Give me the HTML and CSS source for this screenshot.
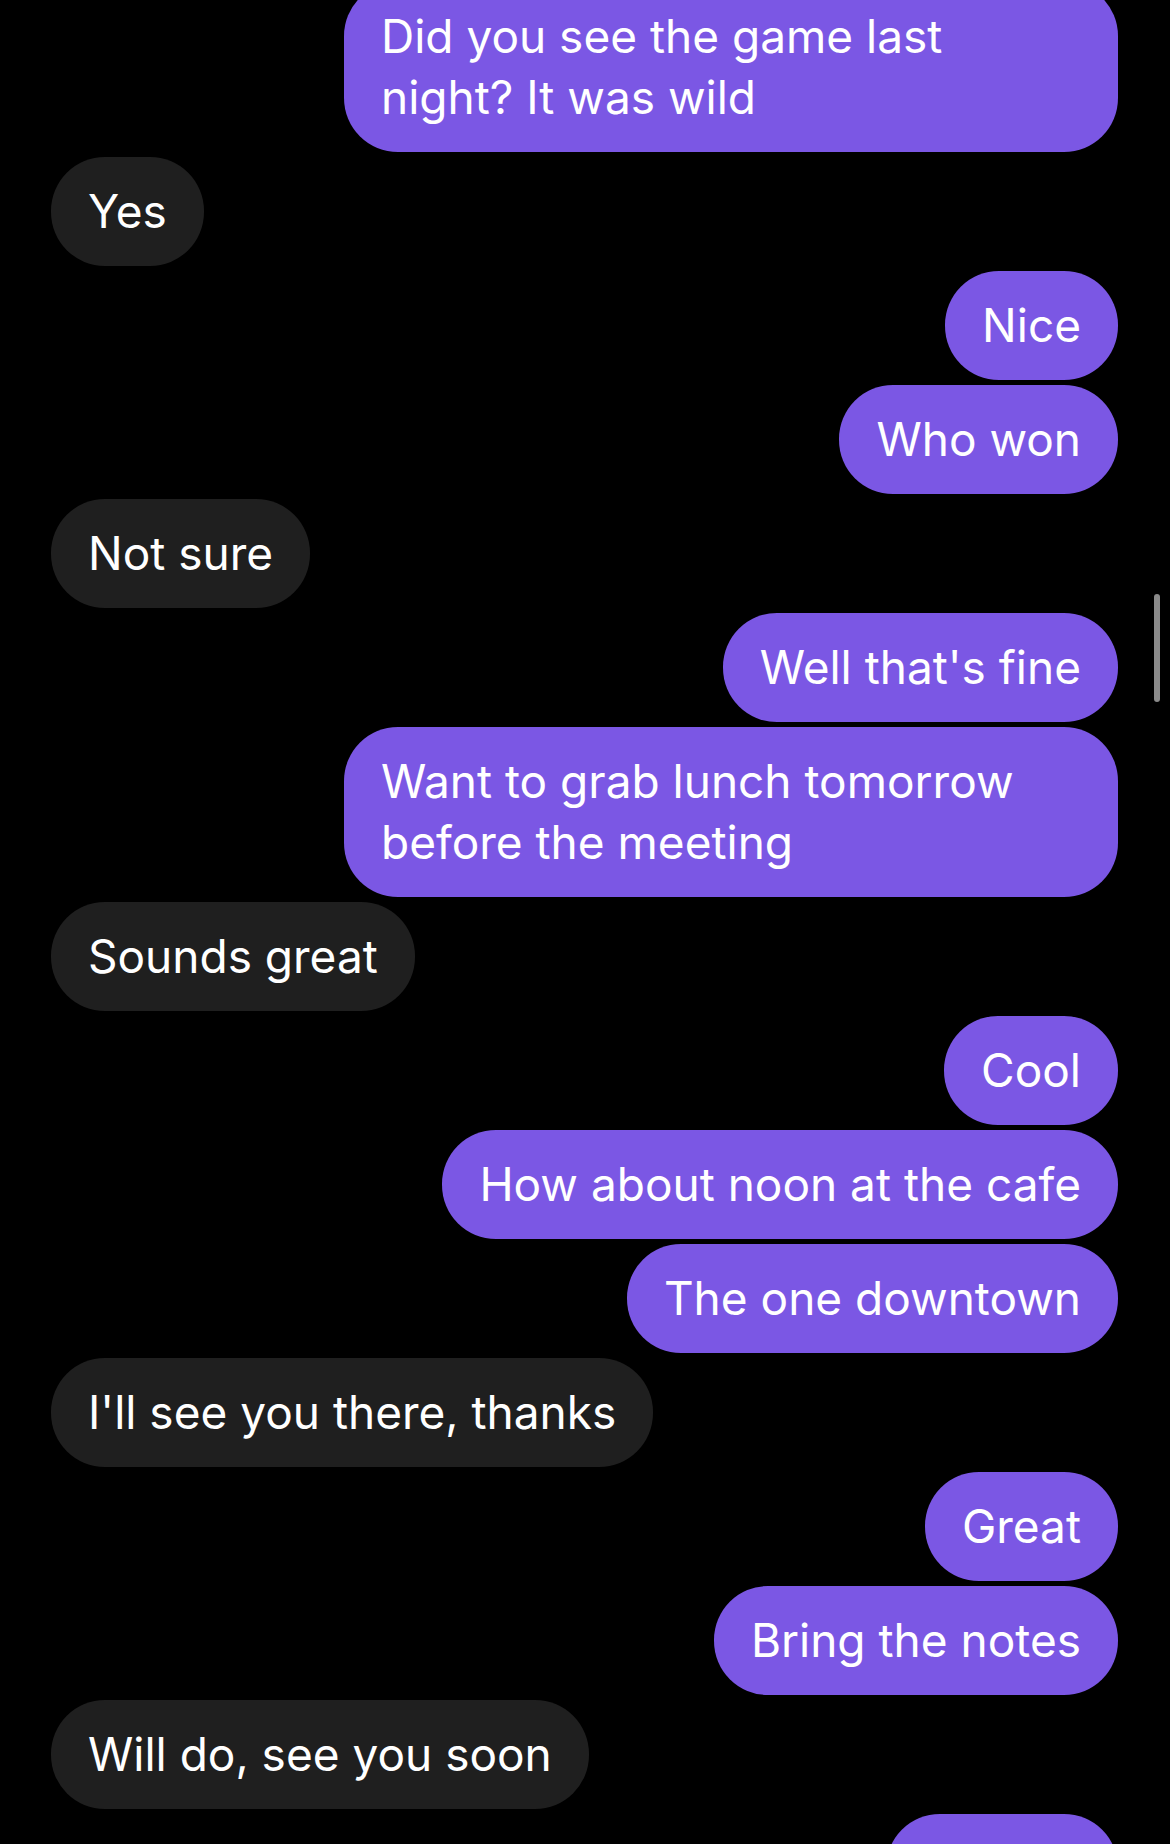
FILE: index.html
```html
<!DOCTYPE html>
<html lang="en">
<head>
  <meta charset="UTF-8" />
  <meta name="viewport" content="width=device-width, initial-scale=1.0" />
  <title>Chat</title>
  <link rel="stylesheet" href="styles.css">
</head>
<body>
  <div class="thread">
    <div class="msg sent">Did you see the game last night? It was wild</div>
    <div class="msg recv">Yes</div>
    <div class="msg sent">Nice</div>
    <div class="msg sent">Who won</div>
    <div class="msg recv">Not sure</div>
    <div class="msg sent">Well that's fine</div>
    <div class="msg sent">Want to grab lunch tomorrow before the meeting</div>
    <div class="msg recv">Sounds great</div>
    <div class="msg sent">Cool</div>
    <div class="msg sent">How about noon at the cafe</div>
    <div class="msg sent">The one downtown</div>
    <div class="msg recv">I'll see you there, thanks</div>
    <div class="msg sent">Great</div>
    <div class="msg sent">Bring the notes</div>
    <div class="msg recv">Will do, see you soon</div>
    <div class="msg sent">Perfect</div>
  </div>
  <div class="scrollbar"></div>
</body>
</html>
```

FILE: styles.css
```css
body {
  margin: 0;
  background: #000;
  font-family: Inter, "Noto Sans", sans-serif;
  overflow: hidden;
}
.thread {
  display: flex;
  flex-direction: column;
  gap: 5px;
  padding: 0 52px 0 51px;
  margin-top: -18px;
}
.msg {
  max-width: 700px;
  padding: 24px 37px;
  border-radius: 54px;
  font-size: 46px;
  line-height: 61px;
  color: #fff;
}
.sent {
  align-self: flex-end;
  background: #7b57e4;
}
.recv {
  align-self: flex-start;
  background: #1f1f1f;
}
.scrollbar {
  position: absolute;
  top: 594px;
  right: 10px;
  width: 6px;
  height: 108px;
  border-radius: 3px;
  background: #8a8a8a;
}
```
